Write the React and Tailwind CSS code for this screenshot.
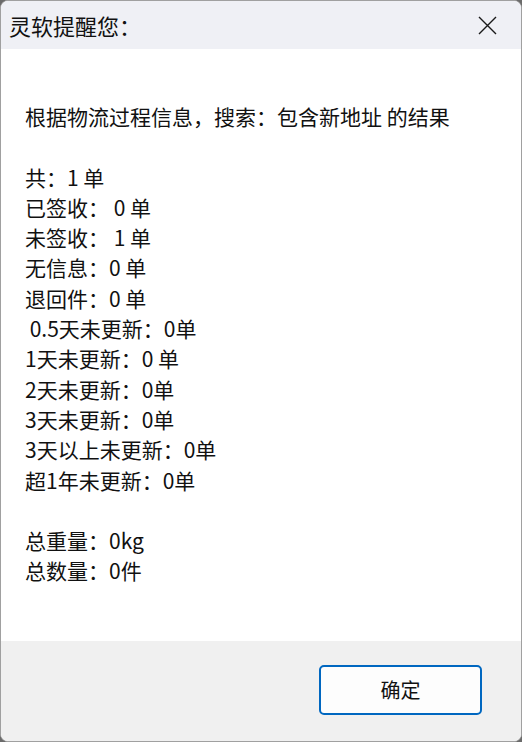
import React from 'react';

const lines = [
    '根据物流过程信息，搜索：包含新地址 的结果',
    '',
    '共：1 单',
    '已签收： 0 单',
    '未签收： 1 单',
    '无信息：0 单',
    '退回件：0 单',
    ' 0.5天未更新：0单',
    '1天未更新：0 单',
    '2天未更新：0单',
    '3天未更新：0单',
    '3天以上未更新：0单',
    '超1年未更新：0单',
    '',
    '总重量：0kg',
    '总数量：0件',
];

const CloseIcon = () => (
    <svg width="19" height="19" viewBox="0 0 19 19" fill="none" stroke="#1a1a1a" strokeWidth="1.4">
        <path d="M1 1 L18 18 M18 1 L1 18" />
    </svg>
);

export default function App() {
    return (
        <div className="h-[742px] w-[522px] bg-[#6b6b6b]" style={{ fontFamily: '"Noto Sans CJK SC", "Noto Sans", sans-serif' }}>
            <div className="flex h-full w-full flex-col overflow-hidden rounded-[8px] border border-[#a0a0a0] bg-white text-[#111]">
                {/* title bar */}
                <div className="flex h-[48px] shrink-0 items-center justify-between bg-[#eff0f5] pl-[8px] pr-[24px]">
                    <span className="text-[22px] leading-none">灵软提醒您：</span>
                    <CloseIcon />
                </div>

                {/* message */}
                <div className="flex-1 pl-[24px] pt-[52px]">
                    {lines.map((t, i) => (
                        <div key={i} className="h-[30.3px] whitespace-pre text-[21px] leading-[30.3px]">
                            {t}
                        </div>
                    ))}
                </div>

                {/* footer */}
                <div className="flex h-[100px] shrink-0 items-start justify-end bg-[#f0f0f0] pr-[39px] pt-[24px]">
                    <button
                        type="button"
                        className="flex h-[50px] w-[163px] items-center justify-center rounded-[5px] border-2 border-[#0067c0] bg-[#fdfdfd] text-[20px] text-[#111]"
                    >
                        确定
                    </button>
                </div>
            </div>
        </div>
    );
}
